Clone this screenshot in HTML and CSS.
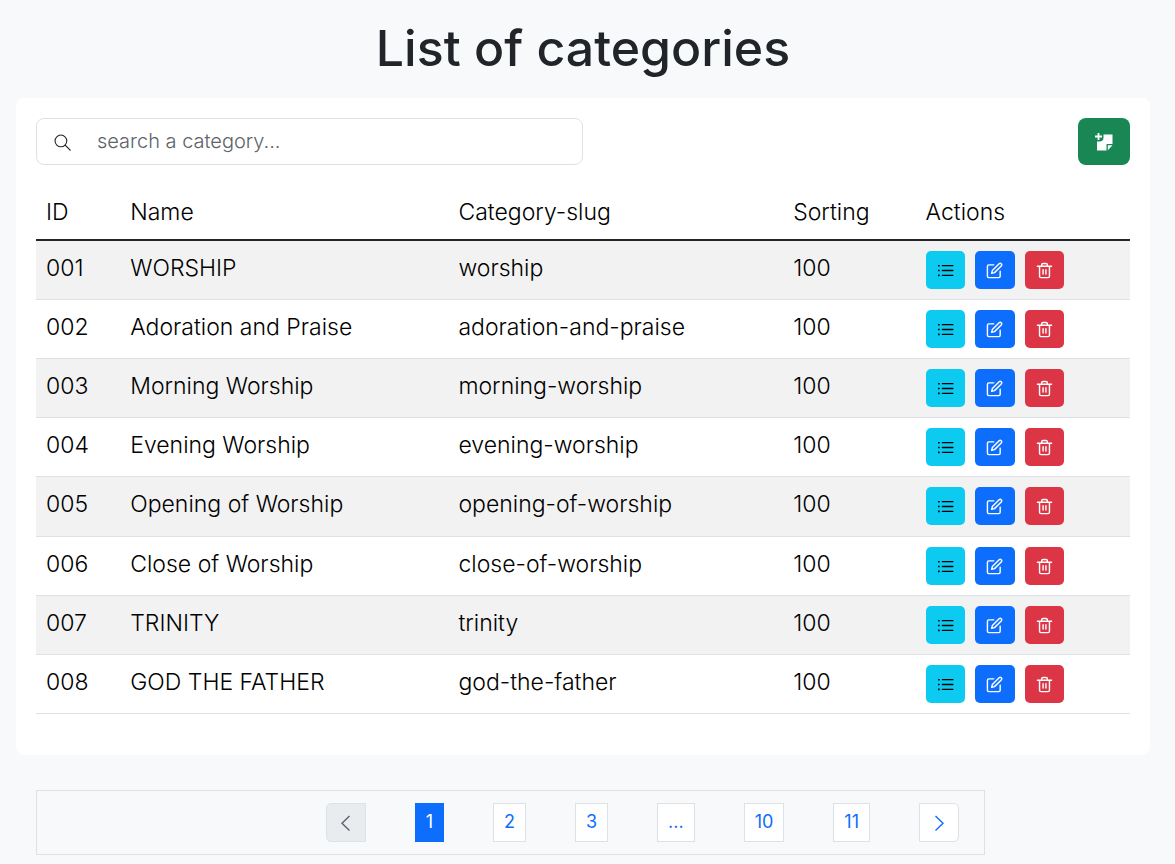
FILE: index.html
```html
<!DOCTYPE html>
<html lang="en">
<head>
<meta charset="utf-8">
<meta name="viewport" content="width=device-width, initial-scale=1">
<title>List of categories</title>
<link rel="stylesheet" href="styles.css">
</head>
<body>
<svg class="sprite" aria-hidden="true">
  <symbol id="list" viewBox="0 0 16 16"><path d="M5 3.5h10M5 8h10M5 12.5h10" fill="none" stroke="currentColor" stroke-width="1.2" stroke-linecap="round"/><path d="M1 2.8h1.5v1.5H1zM1 7.3h1.5v1.5H1zM1 11.8h1.5v1.5H1z" fill="currentColor"/></symbol>
  <symbol id="edit" viewBox="0 0 24 24"><path d="M11 4H4a2 2 0 0 0-2 2v14a2 2 0 0 0 2 2h14a2 2 0 0 0 2-2v-7M18.5 2.5a2.1 2.1 0 0 1 3 3L12 15l-4 1 1-4z" fill="none" stroke="currentColor" stroke-width="2" stroke-linejoin="round" stroke-linecap="round"/></symbol>
  <symbol id="trash" viewBox="0 0 24 24"><path d="M2 6h20M19 6v14a2 2 0 0 1-2 2H7a2 2 0 0 1-2-2V6M8 6V4a2 2 0 0 1 2-2h4a2 2 0 0 1 2 2v2M10 11v6M14 11v6" fill="none" stroke="currentColor" stroke-width="2" stroke-linejoin="round" stroke-linecap="round"/></symbol>
</svg>
<main class="page">
  <h1 class="title">List of categories</h1>
  <section class="card">
    <div class="toolbar">
      <label class="search">
        <svg class="icon-search" viewBox="0 0 16 16" aria-hidden="true"><circle cx="6.5" cy="6.5" r="5.5" fill="none" stroke="currentColor"/><path d="M10.5 10.5L15.2 15.2" stroke="currentColor" stroke-width="1.2" stroke-linecap="round"/></svg>
        <input class="search-input" type="text" placeholder="search a category..." aria-label="Search a category">
      </label>
      <button class="add" type="button" aria-label="Add category">
        <svg class="icon-add" viewBox="0 0 18 18" aria-hidden="true"><path d="M3.5 0v7M0 3.5h7" stroke="currentColor" stroke-width="1.8"/><path d="M8.5 1.5H17.5V11H11.5V17.5H2V8.5H4.5Q8.5 8.5 8.5 4.5Z" fill="currentColor"/><path d="M12.8 17.3V12.3H17.5Z" fill="currentColor"/></svg>
      </button>
    </div>
    <table class="table">
      <colgroup><col class="col-id"><col class="col-name"><col class="col-slug"><col class="col-sort"><col></colgroup>
      <thead><tr><th>ID</th><th>Name</th><th>Category-slug</th><th>Sorting</th><th>Actions</th></tr></thead>
      <tbody id="rows"></tbody>
    </table>
  </section>
  <nav class="pagination" aria-label="Pages">
    <button class="page-item prev" type="button" disabled aria-label="Previous"><svg class="chevron" viewBox="0 0 18 18"><path d="M12.5 2L5 9.2L12.5 16.5" fill="none" stroke="currentColor" stroke-width="1.4"/></svg></button>
    <a class="page-item active" href="#1" aria-current="page">1</a>
    <a class="page-item" href="#2">2</a>
    <a class="page-item" href="#3">3</a>
    <a class="page-item" href="#more">...</a>
    <a class="page-item" href="#10">10</a>
    <a class="page-item" href="#11">11</a>
    <a class="page-item next" href="#next" aria-label="Next"><svg class="chevron" viewBox="0 0 18 18"><path d="M5.5 2L13 9.2L5.5 16.5" fill="none" stroke="currentColor" stroke-width="1.4"/></svg></a>
  </nav>
</main>
<script src="script.js"></script>
</body>
</html>
```
FILE: styles.css
```css
* { box-sizing: border-box; }
body {
  margin: 0;
  background: #f8f9fb;
  color: #212529;
  font-family: Inter, "Liberation Sans", sans-serif;
  font-weight: 300;
  font-size: 23px;
  line-height: 34px;
}
.sprite { display: none; }
.page { padding: 18px 25px 9px 16px; }
.title {
  margin: 0 0 20px;
  font-size: 50px;
  line-height: 60px;
  font-weight: 500;
  text-align: center;
}
.card {
  padding: 20px 20px 41px;
  background: #fff;
  border-radius: 8px;
}
.toolbar { display: flex; justify-content: space-between; }
.search {
  display: flex;
  align-items: center;
  width: 50%;
  height: 47px;
  padding-left: 17px;
  border: 1px solid #dee2e6;
  border-radius: 8px;
}
.icon-search { width: 17px; height: 17px; flex: none; margin-top: 2px; }
.search-input {
  flex: 1;
  min-width: 0;
  height: 45px;
  padding: 0 16px 2px 26px;
  border: 0;
  outline: 0;
  background: transparent;
  color: #212529;
  font: inherit;
  font-size: 20px;
}
.search-input::placeholder { color: #5c636a; opacity: 1; }
.add {
  display: grid;
  place-items: center;
  width: 52px;
  height: 47px;
  padding: 0;
  border: 0;
  border-radius: 8px;
  background: #198754;
  color: #fff;
}
.icon-add { width: 18px; height: 18px; }
.table {
  width: 100%;
  height: 529px;
  margin-top: 20px;
  border-collapse: collapse;
  table-layout: fixed;
  color: #000;
}
.col-id { width: 7.7%; }
.col-name { width: 30%; }
.col-slug { width: 30.6%; }
.col-sort { width: 12.1%; }
.table th {
  height: 55px;
  padding: 10px;
  font-weight: 300;
  text-align: left;
  border-bottom: 2px solid #212529;
}
.table td {
  padding: 10px;
  vertical-align: top;
  border-bottom: 1px solid #dee2e6;
}
.table tbody tr:nth-child(odd) { background: #f2f2f2; }
.actions { display: flex; gap: 10px; }
.btn {
  display: grid;
  place-items: center;
  width: 39px;
  height: 38px;
  padding: 1px 0 0;
  border: 0;
  border-radius: 5px;
  color: #fff;
}
.btn-list { background: #0dcaf0; color: #000; }
.btn-edit { width: 40px; background: #0d6efd; }
.btn-trash { background: #dc3545; }
.btn-icon { width: 17px; height: 17px; }
.pagination {
  display: flex;
  justify-content: flex-end;
  gap: 49px;
  margin: 35px 165px 0 20px;
  padding: 12px 25px;
  border: 1px solid #dee2e6;
}
.page-item {
  display: flex;
  align-items: center;
  height: 39px;
  padding: 0 10px 2px;
  border: 1px solid #dee2e6;
  background: #fff;
  color: #0d6efd;
  font-family: inherit;
  font-size: 18px;
  font-weight: 400;
  text-decoration: none;
}
.prev { border-radius: 5px 0 0 5px; background: #e9ecef; color: #5c636a; padding-bottom: 0; }
.next { border-radius: 0 5px 5px 0; padding-bottom: 0; }
.active { background: #0d6efd; border-color: #0d6efd; color: #fff; }
.chevron { width: 18px; height: 18px; }
```
FILE: script.js
```js
const categories = [
  ["WORSHIP", "worship"],
  ["Adoration and Praise", "adoration-and-praise"],
  ["Morning Worship", "morning-worship"],
  ["Evening Worship", "evening-worship"],
  ["Opening of Worship", "opening-of-worship"],
  ["Close of Worship", "close-of-worship"],
  ["TRINITY", "trinity"],
  ["GOD THE FATHER", "god-the-father"]
];
const button = (icon, label) =>
  `<button class="btn btn-${icon}" type="button" aria-label="${label}"><svg class="btn-icon"><use href="#${icon}"/></svg></button>`;
document.getElementById("rows").innerHTML = categories.map(([name, slug], i) =>
  `<tr><td>00${i + 1}</td><td>${name}</td><td>${slug}</td><td>100</td><td><div class="actions">${button("list", "Show")}${button("edit", "Edit")}${button("trash", "Delete")}</div></td></tr>`
).join("");
```
